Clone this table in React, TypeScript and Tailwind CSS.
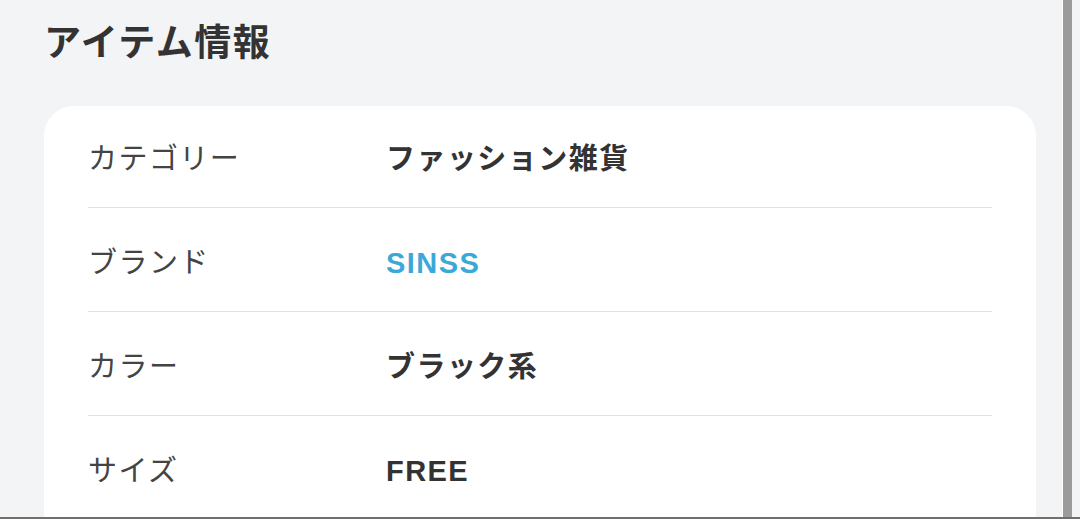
import React from 'react';

type Row = {
  label: string;
  value: string;
  link?: boolean;
};

const rows: Row[] = [
  { label: 'カテゴリー', value: 'ファッション雑貨' },
  { label: 'ブランド', value: 'SINSS', link: true },
  { label: 'カラー', value: 'ブラック系' },
  { label: 'サイズ', value: 'FREE' },
];

const font = { fontFamily: '"Liberation Sans", "Noto Sans CJK JP", sans-serif' };

const App: React.FC = () => {
  return (
    <div className="h-[519px] w-[1080px] overflow-hidden flex border-b-2 border-[#6f6f6f] bg-[#f3f4f6]" style={font}>
      <div className="flex-1 pl-[44px] pr-[26px] pt-[22px] overflow-hidden">
        <h2 className="text-[37px] leading-[44px] font-bold text-[#333333] tracking-[0.04em]">アイテム情報</h2>
        <div className="mt-[40px] bg-white rounded-[30px] px-[44px] h-[600px]">
          {rows.map((row, i) => (
            <div
              key={row.label}
              className={`flex items-center pb-[28px] ${
                i === 0 ? 'pt-[33px]' : 'pt-[35px] border-t border-[#e2e2e2]'
              }`}
            >
              <div className="w-[298px] text-[29px] leading-[40px] text-[#444444] tracking-[0.05em]">{row.label}</div>
              <div
                className={`text-[29px] leading-[40px] font-bold tracking-[0.05em] ${
                  row.link ? 'text-[#3aa9d9]' : 'text-[#333333]'
                }`}
              >
                {row.value}
              </div>
            </div>
          ))}
        </div>
      </div>
      <div className="w-px bg-white" />
      <div className="w-[9px] bg-[#9b9b9b]" />
      <div className="w-[8px] bg-[#f3f4f6]" />
    </div>
  );
};

export default App;
